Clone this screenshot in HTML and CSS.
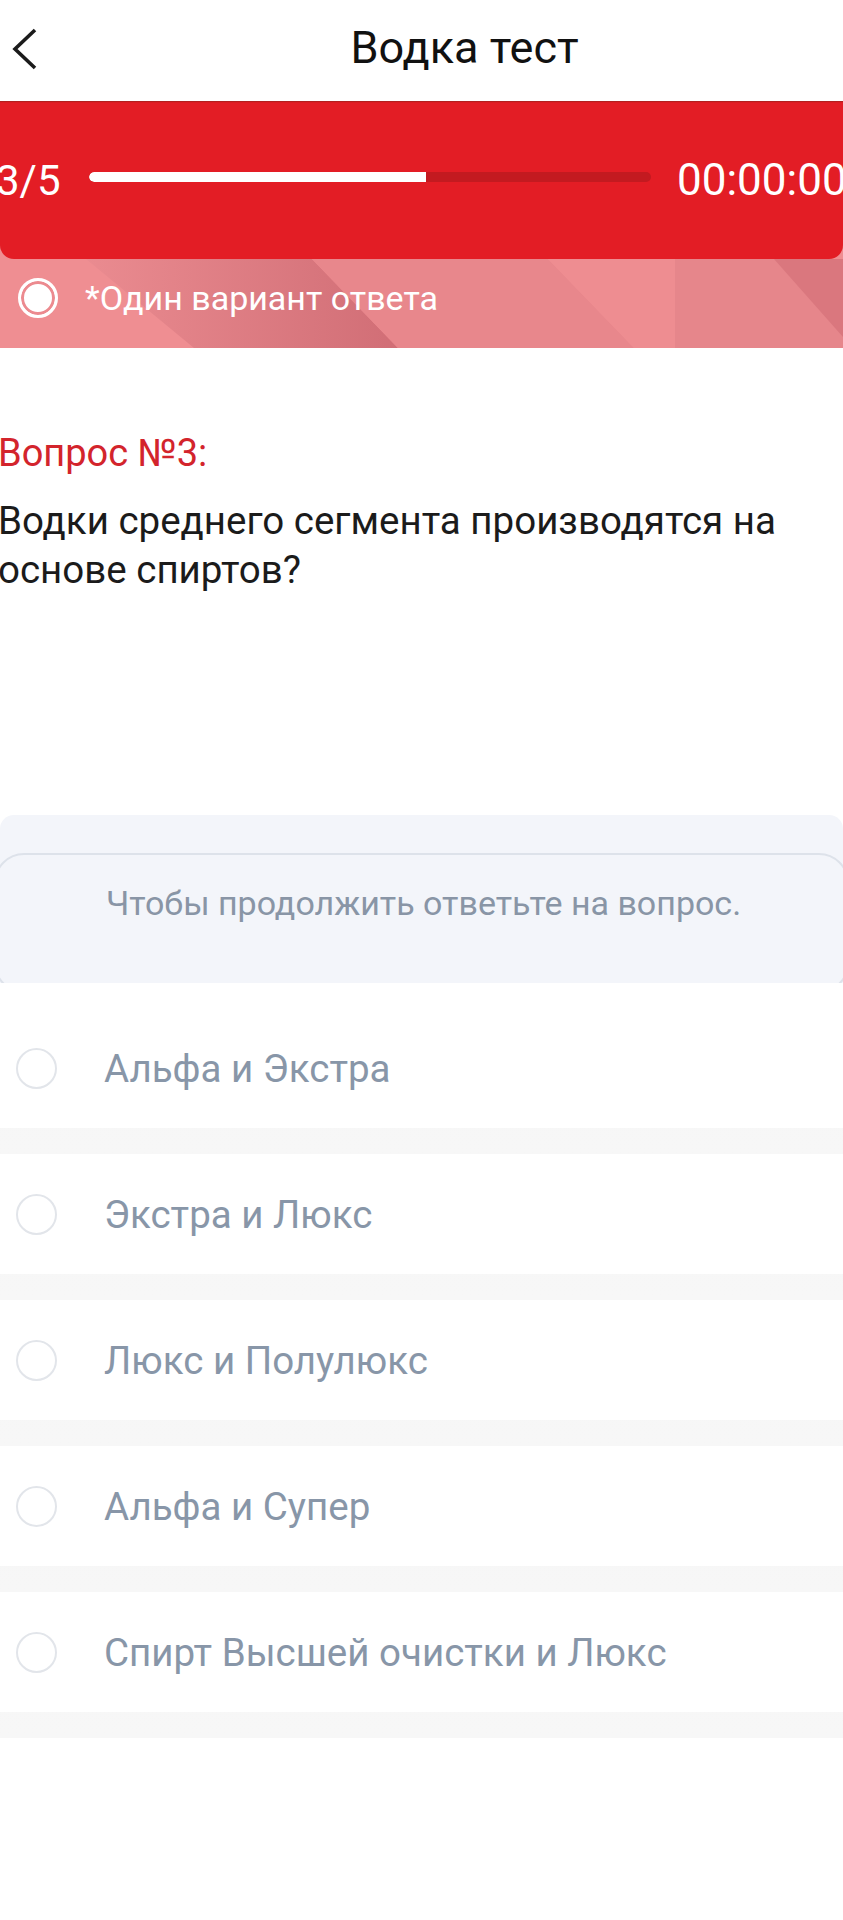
FILE: index.html
```html
<!DOCTYPE html>
<html lang="ru">
<head>
  <meta charset="UTF-8">
  <title>Водка тест</title>
  <link rel="stylesheet" href="styles.css">
</head>
<body>
<header class="topbar">
  <svg class="back" width="30" height="44" viewBox="0 0 30 44">
    <polyline points="24,2 4,21 24,40" fill="none" stroke="#1b1b1b" stroke-width="3.6"/>
  </svg>
  <h1 class="title">Водка тест</h1>
</header>

<section class="progress">
  <svg class="progress-bg" width="843" height="247" viewBox="0 0 843 247" preserveAspectRatio="none">
    <defs>
      <linearGradient id="shade" x1="0" y1="0" x2="1" y2="0">
        <stop offset="0" stop-color="#ea8b90"/>
        <stop offset="1" stop-color="#d16e76"/>
      </linearGradient>
    </defs>
    <rect x="0" y="0" width="843" height="247" fill="#ef8e92"/>
    <polygon points="86,158 312,158 398,247 194,247" fill="url(#shade)"/>
    <polygon points="312,158 548,158 634,247 398,247" fill="#e8878c"/>
    <polygon points="548,158 675,158 675,247 634,247" fill="#ee8d91"/>
    <rect x="675" y="158" width="168" height="89" fill="#e6868b"/>
    <polygon points="774,158 843,158 843,236" fill="#da777e"/>
  </svg>
  <div class="bar">
    <span class="count">3/5</span>
    <div class="track"><div class="fill" style="width: 60%"></div></div>
    <span class="timer">00:00:00</span>
  </div>
  <div class="note">
    <span class="note-radio"></span>
    <span>*Один вариант ответа</span>
  </div>
</section>

<section class="question">
  <div class="q-label">Вопрос №3:</div>
  <div class="q-text">Водки среднего сегмента производятся на основе спиртов?</div>
</section>

<section class="hint">
  <div class="hint-inner">Чтобы продолжить ответьте на вопрос.</div>
</section>

<ul class="options">
  <li class="option"><div class="card"><span class="radio"></span>Альфа и Экстра</div></li>
  <li class="option"><div class="card"><span class="radio"></span>Экстра и Люкс</div></li>
  <li class="option"><div class="card"><span class="radio"></span>Люкс и Полулюкс</div></li>
  <li class="option"><div class="card"><span class="radio"></span>Альфа и Супер</div></li>
  <li class="option"><div class="card"><span class="radio"></span>Спирт Высшей очистки и Люкс</div></li>
</ul>
</body>
</html>
```

FILE: styles.css
```css
body {
  margin: 0;
  width: 843px;
  background: #fff;
  font-family: Roboto, "Noto Sans", sans-serif;
  overflow-x: hidden;
}
.topbar {
  height: 101px;
  display: flex;
  align-items: center;
  position: relative;
  box-shadow: 0 1px 1px rgba(90, 40, 20, 0.35);
  z-index: 2;
}
.back {
  margin-left: 11px;
  margin-top: -2px;
  flex: none;
}
.title {
  margin: 0;
  margin-top: -7px;
  flex: 1;
  padding-left: 45px;
  text-align: center;
  font-size: 45px;
  font-weight: 400;
  color: #111;
}
.progress {
  position: relative;
  height: 247px;
}
.progress-bg {
  position: absolute;
  left: 0;
  top: 0;
}
.bar {
  position: relative;
  height: 158px;
  background: #e31d25;
  border-radius: 0 0 14px 14px;
  display: flex;
  align-items: center;
  color: #fff;
  overflow: hidden;
}
.count {
  width: 93px;
  margin-left: -4px;
  font-size: 42px;
  flex: none;
}
.track {
  width: 562px;
  height: 10px;
  margin-top: -6px;
  border-radius: 5px;
  background: #c31a20;
  flex: none;
  overflow: hidden;
}
.fill {
  height: 100%;
  background: #fff;
  border-radius: 5px 0 0 5px;
}
.timer {
  margin-left: 26px;
  font-size: 44px;
  white-space: nowrap;
  flex: none;
}
.note {
  position: relative;
  height: 89px;
  display: flex;
  align-items: center;
  color: #fff;
  font-size: 34px;
  margin-top: -6px;
}
.note-radio {
  width: 40px;
  height: 40px;
  margin-left: 18px;
  margin-right: 27px;
  border: 3px solid #fff;
  border-radius: 50%;
  box-sizing: border-box;
  background: #fff;
  box-shadow: inset 0 0 0 3px #ec8a8f;
  flex: none;
}
.question {
  padding-top: 81px;
  margin-left: -2px;
  height: 467px;
  box-sizing: border-box;
}
.q-label {
  color: #d3242c;
  font-size: 38px;
  line-height: 49px;
}
.q-text {
  margin-top: 18px;
  color: #1b1b1b;
  font-size: 38.5px;
  line-height: 49px;
  width: 835px;
}
.hint {
  height: 168px;
  background: #f3f5fa;
  border-radius: 14px 14px 0 0;
  padding-top: 38px;
  box-sizing: border-box;
  overflow: hidden;
}
.hint-inner {
  margin: 0 -6px;
  height: 140px;
  border: 2px solid #dde2ea;
  border-radius: 30px;
  padding: 28px 0 0 110px;
  box-sizing: border-box;
  font-size: 34px;
  line-height: 40px;
  color: #8995a6;
}
.options {
  list-style: none;
  margin: 25px 0 0;
  padding: 0;
}
.option {
  padding-bottom: 26px;
  background: linear-gradient(#c8c8c8 0, #dcdcdc 4px, #e9e9e9 9px, #f1f1f1 15px, #f6f6f6 22px, #f7f7f7 100%);
}
.card {
  height: 120px;
  background: #fff;
  display: flex;
  align-items: center;
  font-size: 38.5px;
  color: #8896a8;
}
.radio {
  width: 41px;
  height: 41px;
  margin-left: 16px;
  margin-right: 47px;
  border: 2px solid #e2e5ea;
  border-radius: 50%;
  box-sizing: border-box;
  flex: none;
}
```
